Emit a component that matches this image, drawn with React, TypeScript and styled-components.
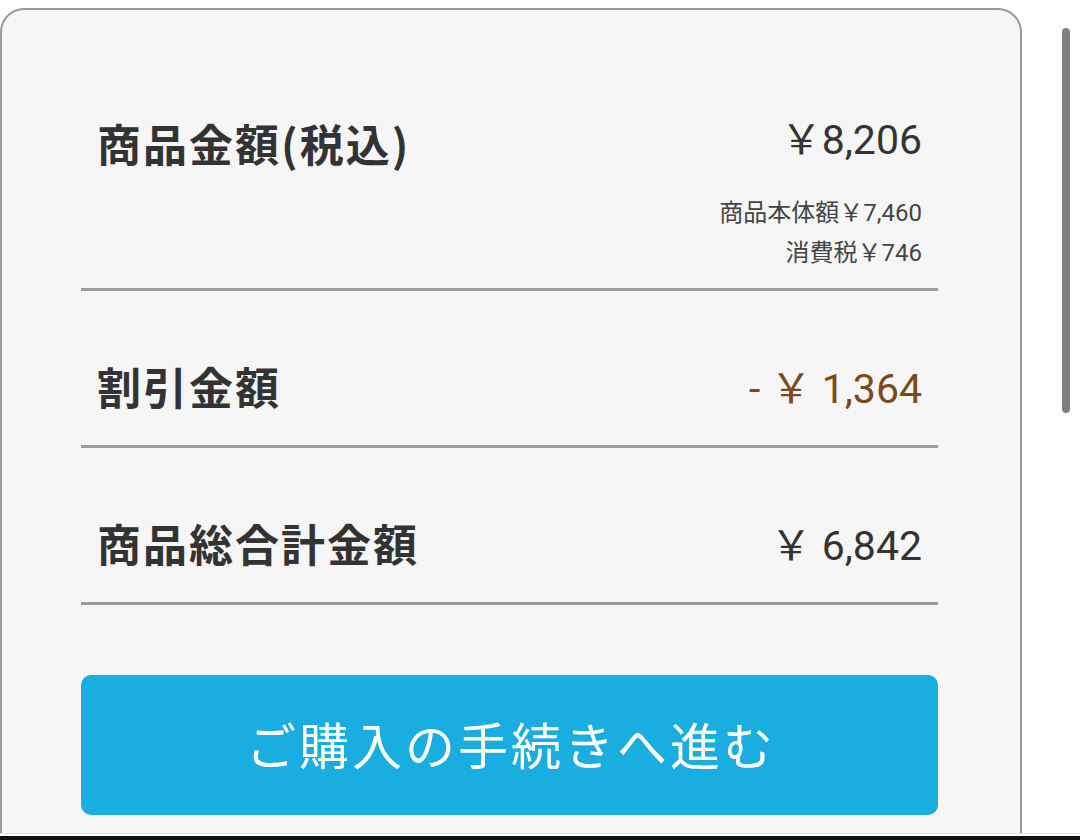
import React from "react"
import styled, { createGlobalStyle } from "styled-components"

const GlobalStyle = createGlobalStyle`
  html, body {
    margin: 0;
    padding: 0;
    background: #ffffff;
  }
  body {
    font-family: "Noto Sans CJK JP", "Roboto", sans-serif;
    color: #333;
  }
`

const Page = styled.div`
  height: 840px;
  display: flex;
  flex-direction: column;
  overflow: hidden;
`

const Main = styled.div`
  flex: 1;
  min-height: 0;
  display: flex;
  overflow: hidden;
`

const Card = styled.div`
  width: 1022px;
  flex-shrink: 0;
  box-sizing: border-box;
  margin-top: 8px;
  padding: 0 82px 0 79px;
  background: #f6f6f6;
  border: 2px solid #9a9a9a;
  border-bottom: none;
  border-radius: 24px 24px 0 0;
`

const Gutter = styled.div`
  flex: 1;
  padding: 28px 0 0 40px;
`

const Thumb = styled.div`
  width: 8px;
  height: 385px;
  border-radius: 4px;
  background: #808080;
`

const Footer = styled.div`
  height: 7px;
  box-sizing: border-box;
  border-top: 1px solid #e0e0e0;
  border-bottom: 4px solid #111;
  background: #fff;
`

const Row = styled.div<{ $top: number; $bottom: number }>`
  display: flex;
  justify-content: space-between;
  align-items: flex-start;
  padding: ${p => p.$top}px 16px ${p => p.$bottom}px;
  border-bottom: 3px solid #9c9c9c;
`

const Label = styled.div`
  font-family: "Noto Sans CJK JP", sans-serif;
  font-weight: 700;
  font-size: 44px;
  letter-spacing: 2px;
  line-height: 60px;
  margin-top: -3px;
  color: #333;
`

const Amounts = styled.div`
  display: flex;
  flex-direction: column;
  align-items: flex-end;
`

const Value = styled.div<{ $color?: string; $shift?: number }>`
  font-family: "Roboto", "Noto Sans CJK JP", sans-serif;
  font-size: 41px;
  line-height: 60px;
  margin-top: ${p => p.$shift ?? 0}px;
  color: ${p => p.$color || "#333"};
  white-space: pre;
`

const SubLines = styled.div`
  margin-top: 23px;
  display: flex;
  flex-direction: column;
  align-items: flex-end;
`

const SubLine = styled.div`
  font-family: "Roboto", "Noto Sans CJK JP", sans-serif;
  font-size: 24px;
  line-height: 40px;
  color: #444;
`

const BuyButton = styled.button`
  display: block;
  width: 100%;
  height: 140px;
  margin-top: 70px;
  border: none;
  border-radius: 10px;
  background: #1aade0;
  color: #fff;
  font-family: "Noto Sans CJK JP", sans-serif;
  font-weight: 400;
  font-size: 50px;
  letter-spacing: 3px;
  padding: 0 0 4px 3px;
  cursor: pointer;
`

export default function App() {
  return (
    <Page>
      <GlobalStyle />
      <Main>
        <Card>
          <Row $top={106} $bottom={15}>
            <Label>商品金額(税込)</Label>
            <Amounts>
              <Value $shift={-6}>￥8,206</Value>
              <SubLines>
                <SubLine>商品本体額￥7,460</SubLine>
                <SubLine>消費税￥746</SubLine>
              </SubLines>
            </Amounts>
          </Row>

          <Row $top={68} $bottom={26}>
            <Label>割引金額</Label>
            <Value $color="#7a4a1c">- ￥ 1,364</Value>
          </Row>

          <Row $top={68} $bottom={26}>
            <Label>商品総合計金額</Label>
            <Value>￥ 6,842</Value>
          </Row>

          <BuyButton>ご購入の手続きへ進む</BuyButton>
        </Card>
        <Gutter>
          <Thumb />
        </Gutter>
      </Main>
      <Footer />
    </Page>
  )
}
